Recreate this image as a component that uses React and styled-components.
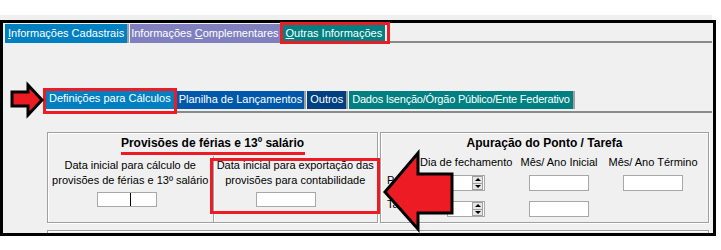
import React from 'react';
import styled, { createGlobalStyle } from 'styled-components';

const Global = createGlobalStyle`
  html, body { margin: 0; padding: 0; background: #fff; }
  body { font-family: "Liberation Sans", Arial, sans-serif; font-size: 11px; color: #000; }
`;

const RED = '#ed1c24';

const Page = styled.div`
  position: relative;
  width: 721px;
  height: 250px;
  padding-top: 15px;
  box-sizing: border-box;
  overflow: hidden;
`;

const TopBand = styled.div`
  width: 712px;
  height: 5px;
  background: #f0f0f0;
`;

const Frame = styled.div`
  width: 716px;
  height: 216px;
  box-sizing: border-box;
  border: 3px solid #000;
  background: #f0f0f0;
  overflow: hidden;
  display: flex;
  flex-direction: column;
`;

const TopTabs = styled.div`
  display: flex;
  align-items: flex-start;
  margin: 1px 1px 0 2px;
  height: 21px;
`;

const SubTabs = styled.div`
  display: flex;
  align-items: flex-end;
  margin: 46px 1px 0 40px;
  padding: 0 0 2px 3px;
  border-bottom: 2px solid #8a8a8a;
`;

const Tab = styled.div`
  height: ${p => p.$h}px;
  line-height: ${p => p.$h - 1}px;
  padding: 0 ${p => p.$pad ?? 3}px;
  letter-spacing: ${p => p.$ls ?? 0}px;
  white-space: nowrap;
  color: #fff;
  background: ${p => p.$bg};
  border-right: ${p => (p.$sep ? '2px solid #a0a0a0' : '0')};
  margin-right: ${p => p.$mr ?? 1}px;
  box-sizing: border-box;
  u { text-decoration: underline; text-underline-offset: 1px; }
`;

const TabFill = styled.div`
  flex: 1;
  align-self: stretch;
  border-bottom: 2px solid #8a8a8a;
`;

const Groups = styled.div`
  display: flex;
  gap: 2px;
  margin: 19px 0 0 44px;
`;

const GroupBox = styled.div`
  width: ${p => p.$w}px;
  height: ${p => p.$h}px;
  box-sizing: border-box;
  border: 1px solid #a0a0a0;
  box-shadow: inset 1px 1px 0 #fff, 1px 1px 0 #fff;
  padding-top: 3px;
  display: flex;
  flex-direction: column;
  flex-shrink: 0;
`;

const BottomBox = styled(GroupBox)`
  margin: 7px 0 0 44px;
`;

const GroupTitle = styled.div`
  font-size: 12px;
  font-weight: bold;
  line-height: 14px;
  text-align: center;
  white-space: nowrap;
`;

const Columns = styled.div`
  flex: 1;
  display: grid;
  grid-template-columns: 1fr 1fr;
  margin-top: 6px;
`;

const Column = styled.div`
  padding-top: 2px;
  display: flex;
  flex-direction: column;
  ${p => p.$divider && 'border-left: 1px solid #a0a0a0; box-shadow: inset 1px 0 0 #fff;'}
`;

const ColText = styled.div`
  line-height: 15px;
  text-align: center;
  white-space: nowrap;
`;

const Input = styled.div`
  width: ${p => p.$w}px;
  height: ${p => p.$h}px;
  box-sizing: border-box;
  background: #fff;
  border: 1px solid #a8a8a8;
  margin-left: ${p => p.$ml ?? 0}px;
  margin-top: ${p => p.$mt ?? 0}px;
  display: flex;
  padding-left: ${p => p.$caret ?? 0}px;
  justify-self: ${p => p.$justify || 'start'};
`;

const Caret = styled.span`
  width: 1px;
  align-self: stretch;
  background: #000;
`;

const PontoGrid = styled.div`
  display: grid;
  grid-template-columns: 33px 88px 102px 86px;
  grid-template-rows: 14px 22px 26px;
  align-items: end;
  margin: 5px 0 0 6px;
  white-space: nowrap;
`;

const Head = styled.div`
  line-height: 14px;
  text-align: ${p => p.$align || 'center'};
  justify-self: ${p => (p.$align === 'left' ? 'start' : 'center')};
`;

const RowLabel = styled.div`
  align-self: center;
  line-height: 14px;
`;

const Spinner = styled.div`
  width: 38px;
  height: 16px;
  box-sizing: border-box;
  margin-left: 27px;
  background: #fff;
  border: 1px solid #a8a8a8;
  display: flex;
  justify-content: flex-end;
  padding: 0 1px;
`;

const SpinButtons = styled.div`
  width: 11px;
  display: flex;
  flex-direction: column;
`;

const SpinBtn = styled.div`
  flex: 1;
  box-sizing: border-box;
  background: #e6e6e6;
  border: 1px solid #a0a0a0;
  border-top-width: ${p => (p.$down ? 0 : 1)}px;
  display: flex;
  align-items: center;
  justify-content: center;
  &::after {
    content: '';
    border-left: 3px solid transparent;
    border-right: 3px solid transparent;
    ${p => (p.$down ? 'border-top: 3px solid #000;' : 'border-bottom: 3px solid #000;')}
  }
`;

const Mark = styled.div`
  position: absolute;
  left: ${p => p.$x}px;
  top: ${p => p.$y}px;
  width: ${p => p.$w}px;
  height: ${p => p.$h}px;
  box-sizing: border-box;
  border: 3px solid ${RED};
  pointer-events: none;
`;

const Underline = styled.div`
  position: absolute;
  left: ${p => p.$x}px;
  top: ${p => p.$y}px;
  width: ${p => p.$w}px;
  height: 3px;
  background: ${RED};
`;

const ArrowSvg = styled.svg`
  position: absolute;
  left: 0;
  top: 0;
  pointer-events: none;
`;

const Spin = () => (
  <Spinner>
    <SpinButtons>
      <SpinBtn />
      <SpinBtn $down />
    </SpinButtons>
  </Spinner>
);

export default function App() {
  return (
    <Page>
      <Global />
      <TopBand />
      <Frame>
        <TopTabs>
          <Tab $h={19} $bg="#0080c0" $sep $mr={1}><u>I</u>nformações Cadastrais</Tab>
          <Tab $h={19} $bg="#8080c0" $sep $mr={1} $pad={1}>Informações <u>C</u>omplementares</Tab>
          <Tab $h={19} $bg="#008080" $mr={2}><u>O</u>utras Informações</Tab>
          <TabFill />
        </TopTabs>

        <SubTabs>
          <Tab $h={20} $bg="#0080c0" $mr={3}>Definições para Cálculos</Tab>
          <Tab $h={18} $bg="#0058aa" $sep $pad={2}>Planilha de Lançamentos</Tab>
          <Tab $h={18} $bg="#003f80" $sep>Outros</Tab>
          <Tab $h={18} $bg="#008080" $sep $ls={-0.22}>Dados Isenção/Órgão Público/Ente Federativo</Tab>
        </SubTabs>

        <Groups>
          <GroupBox $w={331} $h={91}>
            <GroupTitle>Provisões de férias e 13º salário</GroupTitle>
            <Columns>
              <Column>
                <ColText>Data inicial para cálculo de</ColText>
                <ColText>provisões de férias e 13º salário</ColText>
                <Input $w={60} $h={15} $ml={49} $mt={4} $caret={32}><Caret /></Input>
              </Column>
              <Column $divider>
                <ColText>Data inicial para exportação das</ColText>
                <ColText>provisões para contabilidade</ColText>
                <Input $w={60} $h={15} $ml={42} $mt={4} />
              </Column>
            </Columns>
          </GroupBox>
          <GroupBox $w={329} $h={91}>
            <GroupTitle>Apuração do Ponto / Tarefa</GroupTitle>
            <PontoGrid>
              <span />
              <Head $align="left">Dia de fechamento</Head>
              <Head>Mês/ Ano Inicial</Head>
              <Head>Mês/ Ano Término</Head>

              <RowLabel>Ponto</RowLabel>
              <Spin />
              <Input $w={60} $h={16} $justify="center" />
              <Input $w={60} $h={16} $justify="center" />

              <RowLabel>Tarefa</RowLabel>
              <Spin />
              <Input $w={60} $h={16} $justify="center" />
              <span />
            </PontoGrid>
          </GroupBox>
        </Groups>

        <BottomBox $w={662} $h={40} />
      </Frame>

      <Mark $x={280} $y={22} $w={110} $h={22} />
      <Mark $x={43} $y={88} $w={134} $h={26} />
      <Mark $x={210} $y={158} $w={170} $h={56} />
      <Underline $x={121} $y={152} $w={184} />

      <ArrowSvg width="721" height="250" viewBox="0 0 721 250">
        <polygon
          points="12,92 28,92 28,85 42,100 28,115 28,106 12,106"
          fill={RED}
          stroke="#000"
          strokeWidth="3"
          strokeLinejoin="miter"
        />
        <polygon
          points="385,192 418,153 418,174 452,174 452,213 418,213 418,229"
          fill={RED}
          stroke="#000"
          strokeWidth="3"
          strokeLinejoin="miter"
        />
      </ArrowSvg>
    </Page>
  );
}
